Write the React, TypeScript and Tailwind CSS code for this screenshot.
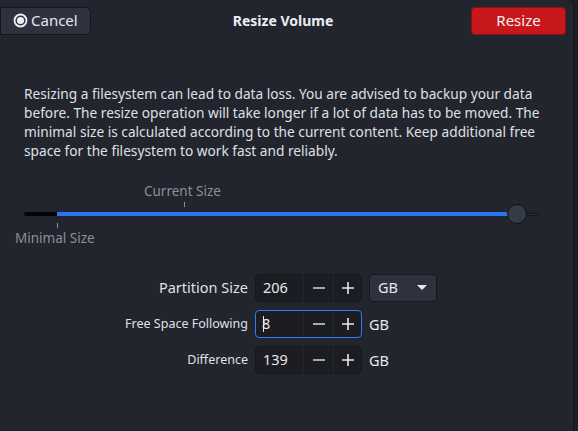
import React from 'react';

const FONT = { fontFamily: '"Noto Sans", "Open Sans", sans-serif' };

function SpinRow({
  label,
  value,
  focused = false,
  big = false,
  unit,
}: {
  label: string;
  value: string;
  focused?: boolean;
  big?: boolean;
  unit: React.ReactNode;
}) {
  return (
    <div className="flex items-center h-[28px]">
      <div
        className={`w-[255px] pr-[7px] text-right text-[#dfe1e5] ${big ? 'text-[14.5px]' : 'text-[12.5px]'}`}
      >
        {label}
      </div>
      <div
        className={`flex h-[28px] w-[107px] rounded-[4px] bg-[#1b1d23] ${
          focused ? 'border border-[#2f7bf0]' : 'border border-[#16181d]'
        }`}
      >
        <div className="flex w-[47px] items-center pl-[7px] text-[14.5px] text-[#e6e8eb]">
          {focused && <span className="mr-[1px] inline-block h-[16px] w-[1px] bg-[#e6e8eb]" />}
          <span className={focused ? '-ml-[3px]' : ''}>{value}</span>
        </div>
        <div className="flex w-[30px] items-center justify-center border-l border-[#24272e]">
          <svg width="14" height="14" viewBox="0 0 14 14">
            <path d="M1 7h12" stroke="#c9ccd2" strokeWidth="1.6" />
          </svg>
        </div>
        <div className="flex w-[28px] items-center justify-center border-l border-[#24272e]">
          <svg width="14" height="14" viewBox="0 0 14 14">
            <path d="M1 7h12M7 1v12" stroke="#e6e8eb" strokeWidth="1.6" />
          </svg>
        </div>
      </div>
      <div className="ml-[7px]">{unit}</div>
    </div>
  );
}

export default function App() {
  return (
    <div className="flex h-[431px] w-[578px] bg-[#1c1e24]" style={FONT}>
      <div className="flex h-full w-[574px] flex-col rounded-tr-[6px] border-r border-[#15171b] bg-[#22252e]">
        {/* header */}
        <div className="flex h-[41px] items-center justify-between pr-[7px]">
          <button className="flex h-[28px] w-[91px] items-center gap-[3px] rounded-r-[5px] border border-[#15171b] bg-[#2e323e] pl-[12px] text-[15px] text-[#e6e8eb]">
            <svg width="15" height="15" viewBox="0 0 15 15">
              <circle cx="7.5" cy="7.5" r="6" fill="none" stroke="#f0f1f3" strokeWidth="1.8" />
              <circle cx="7.5" cy="7.5" r="3.6" fill="#f0f1f3" />
            </svg>
            Cancel
          </button>
          <div className="ml-[4px] text-[14px] font-bold text-[#eceef1]">Resize Volume</div>
          <button className="h-[28px] w-[95px] rounded-[4px] border border-[#8e1012] bg-[#c8171b] text-[15px] text-[#f3f3f5]">
            Resize
          </button>
        </div>

        {/* description */}
        <div className="mt-[43px] pl-[24px] text-[13.7px] leading-[19px] text-[#dee0e4]">
          <div className="whitespace-nowrap">
            Resizing a filesystem can lead to data loss. You are advised to backup your data
          </div>
          <div className="whitespace-nowrap">
            before. The resize operation will take longer if a lot of data has to be moved. The
          </div>
          <div className="whitespace-nowrap">
            minimal size is calculated according to the current content. Keep additional free
          </div>
          <div className="whitespace-nowrap">space for the filesystem to work fast and reliably.</div>
        </div>

        {/* slider */}
        <div className="relative mt-[21px] h-[62px]">
          <div className="absolute left-[144px] top-[0px] text-[13.5px] text-[#8a8f99]">Current Size</div>
          <div className="absolute left-[184px] top-[21px] h-[5px] w-[1px] bg-[#8a8f99]" />
          <div className="absolute left-[24px] top-[31px] h-[4px] w-[34px] rounded-l-full bg-[#050507]" />
          <div className="absolute left-[57px] top-[31px] h-[4px] w-[460px] bg-[#2a76f2]" />
          <div className="absolute left-[517px] top-[32px] h-[3px] w-[22px] rounded-r-full border border-[#14161a] bg-[#2c2f38]" />
          <div className="absolute left-[507px] top-[23px] h-[20px] w-[20px] rounded-full border border-[#101216] bg-[#353a47]" />
          <div className="absolute left-[57px] top-[42px] h-[5px] w-[1px] bg-[#8a8f99]" />
          <div className="absolute left-[15px] top-[47px] text-[13.5px] text-[#8a8f99]">Minimal Size</div>
        </div>

        {/* form */}
        <div className="mt-[31px] flex flex-col gap-[8px]">
          <SpinRow
            label="Partition Size"
            value="206"
            big
            unit={
              <div className="flex h-[28px] w-[68px] items-center justify-between rounded-[4px] border border-[#16181d] bg-[#2e323e] pl-[8px] pr-[9px] text-[14.5px] text-[#e6e8eb]">
                GB
                <svg width="10" height="6" viewBox="0 0 10 6">
                  <path d="M0 0h10L5 5z" fill="#e6e8eb" />
                </svg>
              </div>
            }
          />
          <SpinRow
            label="Free Space Following"
            value="8"
            focused
            unit={<span className="text-[14.5px] text-[#e6e8eb]">GB</span>}
          />
          <SpinRow
            label="Difference"
            value="139"
            unit={<span className="text-[14.5px] text-[#e6e8eb]">GB</span>}
          />
        </div>
      </div>
    </div>
  );
}
